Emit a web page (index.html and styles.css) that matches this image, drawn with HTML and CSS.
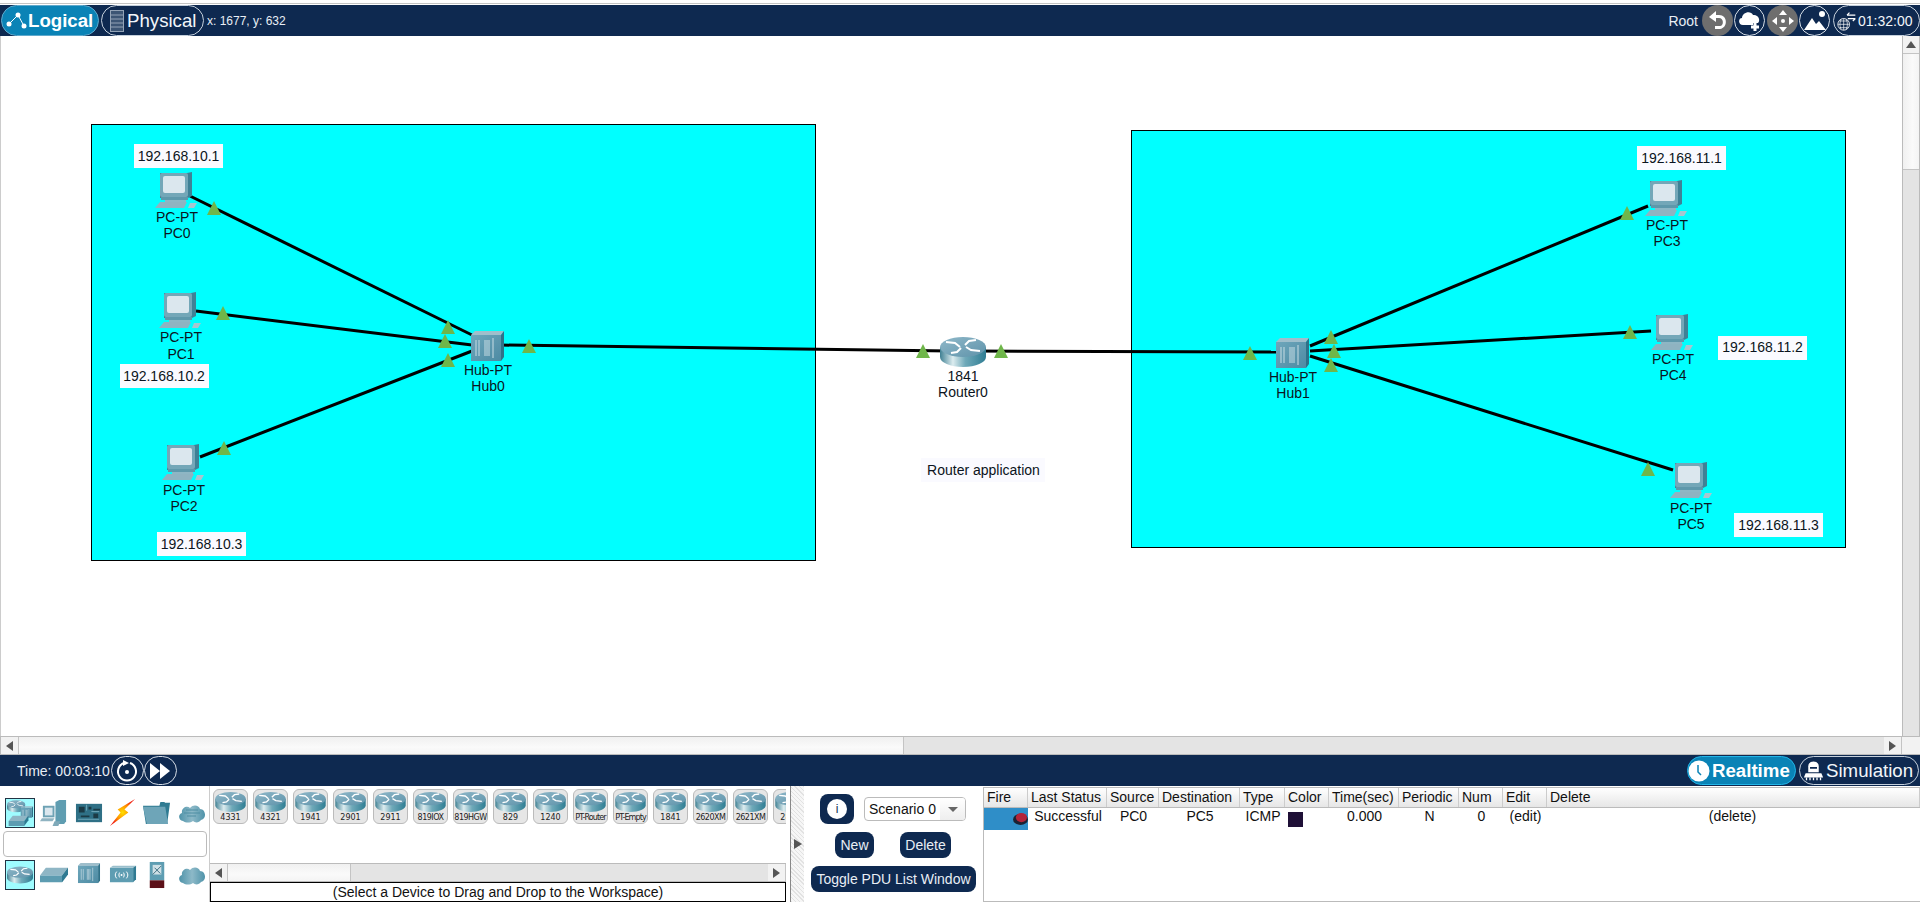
FILE: index.html
```html
<!DOCTYPE html>
<html lang="en">
<head>
<meta charset="utf-8">
<title>Packet Tracer Web</title>
<link rel="stylesheet" href="styles.css">
</head>
<body>
<svg class="defs" width="0" height="0" aria-hidden="true">
  <defs>
    <linearGradient id="rbody" x1="0" x2="1" y1="0" y2="0">
      <stop offset="0" stop-color="#3f8093"/><stop offset=".28" stop-color="#dcecef"/><stop offset=".55" stop-color="#6fa9b9"/><stop offset="1" stop-color="#2f7d93"/>
    </linearGradient>
    <linearGradient id="rtop" x1="0" x2="1" y1="0" y2="1">
      <stop offset="0" stop-color="#8fb8c9"/><stop offset="1" stop-color="#5f93aa"/>
    </linearGradient>
    <linearGradient id="hubf" x1="0" x2="1" y1="0" y2="1">
      <stop offset="0" stop-color="#6ea6bb"/><stop offset="1" stop-color="#4d8ba3"/>
    </linearGradient>
    <linearGradient id="cloudg" x1="0" x2="1" y1="0" y2="0">
      <stop offset="0" stop-color="#4f93a9"/><stop offset=".5" stop-color="#8db9c8"/><stop offset="1" stop-color="#4f93a9"/>
    </linearGradient>
    <radialGradient id="bolt" cx=".5" cy=".5" r=".5">
      <stop offset="0" stop-color="#ffe000"/><stop offset=".6" stop-color="#ff8a00"/><stop offset="1" stop-color="#f02010"/>
    </radialGradient>
    <symbol id="router" viewBox="0 0 46 30">
      <path d="M0 10v10c0 5.500 10.300 10 23 10s23-4.500 23-10V10z" fill="url(#rbody)"/>
      <ellipse cx="23" cy="10" rx="23" ry="10" fill="url(#rtop)"/>
      <path d="M6 5l9 1 5 4M11 16l6-1 4-4M40 14l-9-1-5-3M36 3l-7 1-4 4" fill="none" stroke="#fff" stroke-width="2"/>
    </symbol>
    <symbol id="hub" viewBox="0 0 33 30">
      <path d="M0 4 4 0h29l-3 4z" fill="#9fbecb"/>
      <path d="M30 4l3-4v26l-3 4z" fill="#2f7188"/>
      <rect y="4" width="30" height="26" fill="url(#hubf)"/>
      <path d="M5 9v16M8 9v16M14 9v16M16 9v16M18 9v16M22 7v20" stroke="#c9dde4" stroke-width="1"/>
    </symbol>
    <symbol id="pc" viewBox="0 0 43 37">
      <path d="M5 1 32 1 37 0V24L33 26H5z" fill="#3f8196"/>
      <rect x="5" y="1" width="28" height="24" rx="2" fill="#73a7b8"/>
      <rect x="8" y="4" width="22" height="17" rx="2" fill="#dbe7ee"/>
      <path d="M6 25h27v3H6z" fill="#5e98ab"/>
      <path d="M10 28h21v3H10z" fill="#8eb6c4"/>
      <path d="M5 30h27l-3 6H0z" fill="#8fb3c1"/>
      <path d="M35 31h7l-3 5h-6z" fill="#a9c5cf"/>
    </symbol>
    <symbol id="switch" viewBox="0 0 28 15">
      <path d="M6 0h22l-6 8H0z" fill="#8fb6c5"/><path d="M0 8h22v7H0z" fill="#5d9cb1"/><path d="M22 8l6-8v7l-6 8z" fill="#2f7a92"/>
    </symbol>
    <symbol id="cloud" viewBox="0 0 28 20">
      <path d="M5 18C0 17 0 11 4 10 3 5 9 2 12 5c3-4 9-3 10 1 6 0 7 10 1 11-2 3-6 3-8 1-3 2-7 2-10 0z" fill="url(#cloudg)"/>
    </symbol>
  </defs>
</svg>

<div class="strip"></div>

<header class="bar topbar">
  <div class="pill pill-active pill-logical">
    <svg class="ic-logical" viewBox="0 0 22 20"><path d="M5 12 13 4 19 15" fill="none" stroke="#fff" stroke-width="1"/><circle cx="4" cy="13" r="2.500" fill="#fff"/><circle cx="13" cy="4" r="2.500" fill="#fff"/><circle cx="19" cy="15" r="2.500" fill="#fff"/></svg>
    <span>Logical</span>
  </div>
  <div class="pill pill-physical">
    <svg class="ic-physical" viewBox="0 0 14 22"><rect x=".5" y=".5" width="13" height="21" fill="#3c5574" stroke="#93a3b6"/><path d="M1 5h12M1 9h12M1 13h12M1 17h12" stroke="#93a3b6"/></svg>
    <span>Physical</span>
  </div>
  <span class="coords">x: 1677, y: 632</span>
  <span class="spacer"></span>
  <span class="root">Root</span>
  <div class="round round-gray">
    <svg viewBox="0 0 24 24"><path d="M3 8 10 2v4h3c9 0 9 13 1 14H9v-3h5c4 0 4-8-1-8h-3v4z" fill="#fff"/></svg>
  </div>
  <div class="round round-line">
    <svg viewBox="0 0 24 24"><path d="M5 16c-5 0-5-7-1-7 0-6 9-8 11-3 5-1 8 5 5 8h-5v2z" fill="#fff"/><path d="M17 14v8M13 18h8" stroke="#fff" stroke-width="3"/></svg>
  </div>
  <div class="round round-gray round-move">
    <svg viewBox="0 0 24 24"><path d="M12 1l4 5H8zM12 23l-4-5h8zM1 12l5-4v8zM23 12l-5 4V8z" fill="#fff"/><circle cx="12" cy="12" r="2" fill="#fff"/></svg>
  </div>
  <div class="round round-line">
    <svg viewBox="0 0 24 24"><circle cx="19" cy="5" r="3" fill="#fff"/><path d="M1 21 9 9l4 6 3-3 7 9z" fill="#fff"/></svg>
  </div>
  <div class="pill pill-clock">
    <svg class="ic-net" viewBox="0 0 24 24"><circle cx="8" cy="16" r="7" fill="none" stroke="#fff"/><path d="M1 16h14M8 9v14M3 12h10M3 20h10M5 10c-2 4-2 8 0 12M11 10c2 4 2 8 0 12" stroke="#fff" stroke-width=".8" fill="none"/><path d="M12 5h10M12 5l3-3M22 9H13M22 9l-3 3" stroke="#fff" stroke-width="1.500" fill="none"/></svg>
    <span>01:32:00</span>
  </div>
</header>

<main class="stage">
  <svg class="canvas" viewBox="1 36 1901 700">
    <rect class="area" x="91.500" y="124.500" width="724" height="436"/>
    <rect class="area" x="1131.500" y="130.500" width="714" height="417"/>

    <line class="cable" x1="190" y1="196" x2="472" y2="335"/>
    <line class="cable" x1="196" y1="311" x2="472" y2="345"/>
    <line class="cable" x1="200" y1="457" x2="472" y2="351"/>
    <line class="cable" x1="500" y1="345" x2="950" y2="351"/>
    <line class="cable" x1="975" y1="351" x2="1280" y2="352"/>
    <line class="cable" x1="1310" y1="346" x2="1648" y2="206"/>
    <line class="cable" x1="1310" y1="351" x2="1651" y2="331"/>
    <line class="cable" x1="1310" y1="356" x2="1673" y2="470"/>

    <use href="#pc" x="155" y="172" width="43" height="37"/>
    <use href="#pc" x="159" y="292" width="43" height="37"/>
    <use href="#pc" x="162" y="444" width="43" height="37"/>
    <use href="#pc" x="1645" y="180" width="43" height="37"/>
    <use href="#pc" x="1651" y="314" width="43" height="37"/>
    <use href="#pc" x="1670" y="462" width="43" height="37"/>
    <use href="#hub" x="471" y="331" width="33" height="30"/>
    <use href="#hub" x="1276" y="338" width="33" height="30"/>
    <use href="#router" x="940" y="337" width="46" height="30"/>

    <polygon class="link" points="214,201 221,215 207,215"/>
    <polygon class="link" points="223,306 230,320 216,320"/>
    <polygon class="link" points="224,441 231,455 217,455"/>
    <polygon class="link" points="448,320 455,334 441,334"/>
    <polygon class="link" points="445,334 452,348 438,348"/>
    <polygon class="link" points="448,353 455,367 441,367"/>
    <polygon class="link" points="529,339 536,353 522,353"/>
    <polygon class="link" points="923,344 930,358 916,358"/>
    <polygon class="link" points="1001,344 1008,358 994,358"/>
    <polygon class="link" points="1250,346 1257,360 1243,360"/>
    <polygon class="link" points="1331,330 1338,344 1324,344"/>
    <polygon class="link" points="1334,344 1341,358 1327,358"/>
    <polygon class="link" points="1331,358 1338,372 1324,372"/>
    <polygon class="link" points="1627,206 1634,220 1620,220"/>
    <polygon class="link" points="1630,325 1637,339 1623,339"/>
    <polygon class="link" points="1648,462 1655,476 1641,476"/>

    <text class="dev" x="177" y="222">PC-PT</text><text class="dev" x="177" y="238">PC0</text>
    <text class="dev" x="181" y="342">PC-PT</text><text class="dev" x="181" y="359">PC1</text>
    <text class="dev" x="184" y="495">PC-PT</text><text class="dev" x="184" y="511">PC2</text>
    <text class="dev" x="488" y="375">Hub-PT</text><text class="dev" x="488" y="391">Hub0</text>
    <text class="dev" x="963" y="381">1841</text><text class="dev" x="963" y="397">Router0</text>
    <text class="dev" x="1293" y="382">Hub-PT</text><text class="dev" x="1293" y="398">Hub1</text>
    <text class="dev" x="1667" y="230">PC-PT</text><text class="dev" x="1667" y="246">PC3</text>
    <text class="dev" x="1673" y="364">PC-PT</text><text class="dev" x="1673" y="380">PC4</text>
    <text class="dev" x="1691" y="513">PC-PT</text><text class="dev" x="1691" y="529">PC5</text>

    <rect class="note-bg" x="134" y="144" width="89" height="24"/><text class="note" x="178.500" y="161">192.168.10.1</text>
    <rect class="note-bg" x="120" y="364" width="89" height="24"/><text class="note" x="164" y="381">192.168.10.2</text>
    <rect class="note-bg" x="157" y="532" width="89" height="24"/><text class="note" x="201.500" y="549">192.168.10.3</text>
    <rect class="note-bg" x="1637" y="146" width="89" height="24"/><text class="note" x="1681.500" y="163">192.168.11.1</text>
    <rect class="note-bg" x="1718" y="336" width="89" height="24"/><text class="note" x="1762.500" y="352">192.168.11.2</text>
    <rect class="note-bg" x="1734" y="513" width="89" height="24"/><text class="note" x="1778.500" y="530">192.168.11.3</text>
    <rect class="note-bg" x="921" y="458" width="124" height="24"/><text class="note" x="983.500" y="475">Router application</text>
  </svg>
  <div class="vbar">
    <div class="sb-btn sb-btn-v"><i class="tri tri-up"></i></div>
    <div class="vthumb"></div>
    <div class="vtrack"></div>
  </div>
</main>

<div class="hbar hbar-main">
  <div class="sb-btn"><i class="tri tri-left"></i></div>
  <div class="hthumb hthumb-main"></div>
  <div class="htrack"></div>
  <div class="sb-btn"><i class="tri tri-right"></i></div>
  <div class="corner"></div>
</div>

<div class="bar timebar">
  <span class="time">Time: 00:03:10</span>
  <div class="round round-line round-time">
    <svg viewBox="0 0 24 24"><path d="M9 4a9 9 0 1 0 6 0" fill="none" stroke="#fff" stroke-width="2"/><path d="M8 1l6 3-6 3z" fill="#fff"/><circle cx="12" cy="13" r="2" fill="#fff"/></svg>
  </div>
  <div class="round round-line round-time">
    <svg viewBox="0 0 24 24"><path d="M2 4l10 8-10 8zM12 4l10 8-10 8z" fill="#fff"/></svg>
  </div>
  <span class="spacer"></span>
  <div class="pill pill-active pill-real">
    <svg class="ic-clock" viewBox="0 0 22 22"><circle cx="11" cy="11" r="10.500" fill="#fff"/><path d="M10 5v7l3 3" fill="none" stroke="#0a83b6" stroke-width="1.500"/></svg>
    <span>Realtime</span>
  </div>
  <div class="pill pill-sim">
    <svg class="ic-sim" viewBox="0 0 24 22"><path d="M6 6c0-7 12-7 12 0v7H6z" fill="#fff"/><rect x="8" y="7" width="8" height="2" fill="#0e2950"/><path d="M3 14h18l2 5H1z" fill="#fff"/><path d="M4 19v3M8 19v3M12 19v3M16 19v3M20 19v3" stroke="#fff" stroke-width="1.500"/></svg>
    <span>Simulation</span>
  </div>
</div>

<section class="bottom">
  <div class="cats">
    <div class="cat-row">
      <div class="cat cat-on">
        <svg viewBox="0 0 29 29"><use href="#router" x="1" y="1" width="19" height="13"/><use href="#hub" x="15" y="7" width="13" height="13"/><use href="#switch" x="2" y="17" width="22" height="11"/></svg>
      </div>
      <div class="cat">
        <svg viewBox="0 0 29 29"><path d="M16 3l4-2h7v22l-2 3h-9z" fill="#5f9db1"/><path d="M3 7h12v12H3z" fill="#6ea2b4"/><path d="M5 9h8v8H5z" fill="#dbe7ee"/><path d="M2 20h13l-2 3H0z" fill="#8fb3c1"/><path d="M15 23h6l-2 5h-6z" fill="#7fa9b9"/></svg>
      </div>
      <div class="cat">
        <svg viewBox="0 0 29 29"><rect x="1" y="5" width="27" height="19" fill="#2f7086"/><path d="M4 8h6v6H4zM14 8h3v3h-3zM19 10h7v2h-7zM6 17h9v2H6zM19 15h5v5h-5z" fill="#1b3a45"/><path d="M3 21h22M12 6v6M17 13h8" stroke="#7fb3c4" stroke-width=".8"/></svg>
      </div>
      <div class="cat">
        <svg viewBox="0 0 29 29"><path d="M27 0 16 11l4 3L1 28l11-14-3-3z" fill="url(#bolt)"/></svg>
      </div>
      <div class="cat">
        <svg viewBox="0 0 29 29"><path d="M18 3h4l1 1h5l-3 22H3L0 7h17z" fill="#2f7b92"/><path d="M0 8h23l3 18H4z" fill="#6ea5b8"/></svg>
      </div>
      <div class="cat">
        <svg viewBox="0 0 28 20"><use href="#cloud" width="28" height="20"/><path d="M8 7h12M6 10h16M9 13h9" stroke="#4f8ea3" stroke-width="1"/></svg>
      </div>
    </div>
    <input class="search" type="text" aria-label="Search devices">
    <div class="cat-row">
      <div class="cat cat-on">
        <svg viewBox="0 0 29 29"><use href="#router" x="1" y="5" width="27" height="19"/></svg>
      </div>
      <div class="cat">
        <svg viewBox="0 0 28 15"><use href="#switch" width="28" height="15"/></svg>
      </div>
      <div class="cat">
        <svg viewBox="0 0 29 29"><use href="#hub" x="3" y="2" width="23" height="21"/></svg>
      </div>
      <div class="cat">
        <svg viewBox="0 0 29 29"><path d="M1 7h24v15H1z" fill="#5e9db2"/><path d="M1 7l3-2h24l-3 2z" fill="#9abfcc"/><path d="M25 7l3-2v14l-3 3z" fill="#2f7a92"/><path d="M8 11c-2 2-2 5 0 7M18 11c2 2 2 5 0 7M11 12c-1 2-1 3 0 5M15 12c1 2 1 3 0 5" fill="none" stroke="#fff"/><circle cx="13" cy="14.500" r="1" fill="#fff"/></svg>
      </div>
      <div class="cat">
        <svg viewBox="0 0 29 29"><path d="M7 1h15v19H7z" fill="#5e9db2"/><path d="M7 20h15v8H7z" fill="#5c1018"/><path d="M10 4h9v10h-9z" fill="#cfe0e6"/><path d="M10 14l9-9M12 7l6 6" stroke="#3c6d7f" stroke-width="1"/></svg>
      </div>
      <div class="cat">
        <svg viewBox="0 0 28 20"><use href="#cloud" width="28" height="20"/></svg>
      </div>
    </div>
  </div>

  <div class="library">
    <div class="thumbs">
      <div class="thumb"><svg viewBox="0 0 46 30"><use href="#router" width="46" height="30"/></svg><span>4331</span></div>
      <div class="thumb"><svg viewBox="0 0 46 30"><use href="#router" width="46" height="30"/></svg><span>4321</span></div>
      <div class="thumb"><svg viewBox="0 0 46 30"><use href="#router" width="46" height="30"/></svg><span>1941</span></div>
      <div class="thumb"><svg viewBox="0 0 46 30"><use href="#router" width="46" height="30"/></svg><span>2901</span></div>
      <div class="thumb"><svg viewBox="0 0 46 30"><use href="#router" width="46" height="30"/></svg><span>2911</span></div>
      <div class="thumb"><svg viewBox="0 0 46 30"><use href="#router" width="46" height="30"/></svg><span class="tight">819IOX</span></div>
      <div class="thumb"><svg viewBox="0 0 46 30"><use href="#router" width="46" height="30"/></svg><span class="tight">819HGW</span></div>
      <div class="thumb"><svg viewBox="0 0 46 30"><use href="#router" width="46" height="30"/></svg><span>829</span></div>
      <div class="thumb"><svg viewBox="0 0 46 30"><use href="#router" width="46" height="30"/></svg><span>1240</span></div>
      <div class="thumb"><svg viewBox="0 0 46 30"><use href="#router" width="46" height="30"/></svg><span class="tighter">PT-Router</span></div>
      <div class="thumb"><svg viewBox="0 0 46 30"><use href="#router" width="46" height="30"/></svg><span class="tighter">PT-Empty</span></div>
      <div class="thumb"><svg viewBox="0 0 46 30"><use href="#router" width="46" height="30"/></svg><span>1841</span></div>
      <div class="thumb"><svg viewBox="0 0 46 30"><use href="#router" width="46" height="30"/></svg><span class="tight">2620XM</span></div>
      <div class="thumb"><svg viewBox="0 0 46 30"><use href="#router" width="46" height="30"/></svg><span class="tight">2621XM</span></div>
      <div class="thumb"><svg viewBox="0 0 46 30"><use href="#router" width="46" height="30"/></svg><span>2811</span></div>
    </div>
    <div class="hbar hbar-lib">
      <div class="sb-btn"><i class="tri tri-left"></i></div>
      <div class="hthumb hthumb-lib"></div>
      <div class="htrack"></div>
      <div class="sb-btn"><i class="tri tri-right"></i></div>
    </div>
    <div class="status">(Select a Device to Drag and Drop to the Workspace)</div>
  </div>

  <div class="splitter"><div class="split-core"><i class="tri tri-right tri-split"></i></div></div>

  <div class="scenario">
    <div class="sc-row sc-row-top">
      <button class="info" type="button"><span>i</span></button>
      <div class="select"><span class="select-text">Scenario 0</span><span class="select-arrow"><i class="tri tri-down"></i></span></div>
    </div>
    <div class="sc-row sc-row-mid">
      <button class="btn btn-new" type="button">New</button>
      <button class="btn btn-del" type="button">Delete</button>
    </div>
    <button class="btn btn-toggle" type="button">Toggle PDU List Window</button>
  </div>

  <div class="pdu">
    <div class="pdu-row pdu-head">
      <div>Fire</div><div>Last Status</div><div>Source</div><div>Destination</div><div>Type</div><div>Color</div><div>Time(sec)</div><div>Periodic</div><div>Num</div><div>Edit</div><div>Delete</div>
    </div>
    <div class="pdu-row pdu-data">
      <div class="fire"><svg viewBox="0 0 16 14"><ellipse cx="8" cy="8" rx="8" ry="6" fill="#1c2233"/><ellipse cx="9" cy="6" rx="6" ry="5" fill="#b4243a"/></svg></div>
      <div>Successful</div><div>PC0</div><div>PC5</div><div>ICMP</div><div class="swatch-cell"><i class="swatch"></i></div><div>0.000</div><div>N</div><div>0</div><div>(edit)</div><div class="cell-delete">(delete)</div>
    </div>
  </div>
</section>
</body>
</html>
```

FILE: styles.css
```css
* { box-sizing: border-box; }
html, body { margin: 0; height: 100%; }
body {
  width: 1920px;
  height: 902px;
  overflow: hidden;
  display: flex;
  flex-direction: column;
  background: #fff;
  font-family: "Liberation Sans", Arial, sans-serif;
  font-size: 14px;
  color: #111;
}
.defs { position: absolute; }
.strip { height: 5px; flex: none; border-top: 3px solid #fff; border-bottom: 1px solid #fff; background: #c4c4c4; }

.bar { flex: none; display: flex; align-items: center; background: #0e2950; color: #e8eef5; }
.topbar { height: 31px; padding-left: 1px; }
.timebar { height: 31px; padding-left: 17px; }
.spacer { flex: 1; }

.pill {
  display: flex; align-items: center; height: 31px; border-radius: 15.500px;
  border: 1px solid #c5d0dc; font-size: 18.670px; color: #f2f6fa;
}
.pill-active { background: #0a83b6; color: #fff; font-weight: 700; border-color: #0a83b6; }
.pill-logical { width: 98px; padding-left: 3px; gap: 1px; border-color: #5fa9cc; }
.pill-physical { width: 103px; margin-left: 2px; padding-left: 8px; gap: 3px; }
.ic-logical { width: 22px; height: 20px; }
.ic-physical { width: 14px; height: 22px; }
.coords { margin-left: 3px; font-size: 12px; }
.root { font-size: 14px; margin-right: 4px; }

.round {
  flex: none; width: 31px; height: 31px; border-radius: 50%; margin-right: 1px;
  display: flex; align-items: center; justify-content: center;
}
.round svg { width: 24px; height: 24px; }
.round-gray { background: #6e6e6e; }
.round-line { border: 1px solid #d5dde6; }
.round-move { margin-left: 1px; }
.pill-clock { width: 87px; margin-left: 2px; margin-right: 0; font-size: 14px; padding-left: 3px; gap: 1px; }
.ic-net { width: 20px; height: 22px; }

.time { margin-right: 1px; }
.round-time { width: 33px; height: 29px; border-radius: 15px; margin-right: 0; }
.pill-real { width: 109px; height: 29px; padding-left: 0; gap: 2px; border-color: #21b5e8; margin-right: 3px; }
.pill-sim { width: 120px; height: 29px; padding-left: 3px; gap: 2px; margin-right: 1px; }
.ic-clock { width: 22px; height: 22px; }
.ic-sim { width: 21px; height: 21px; }

.stage { flex: none; height: 700px; display: flex; border-left: 1px solid #ccc; }
.canvas { width: 1901px; height: 700px; display: block; }
.area { fill: #00ffff; stroke: #000; stroke-width: 1; }
.cable { stroke: #000; stroke-width: 3; }
.link { fill: #6fb64a; }
.dev, .note { font-family: "Liberation Sans", Arial, sans-serif; font-size: 14px; text-anchor: middle; fill: #0b1420; }
.note-bg { fill: #fafaff; }

.vbar { width: 18px; flex: none; display: flex; flex-direction: column; border-left: 1px solid #bbb; border-right: 1px solid #bbb; }
.sb-btn { flex: none; width: 18px; height: 100%; display: flex; align-items: center; justify-content: center; background: #f2f2f2; border-right: 1px solid #c4c4c4; }
.sb-btn-v { width: 100%; height: 18px; border-right: 0; border-bottom: 1px solid #c4c4c4; }
.vthumb { height: 116px; flex: none; background: linear-gradient(90deg, #f0f0f0, #fafafa 60%, #f4f4f4); border-bottom: 1px solid #c4c4c4; }
.vtrack { flex: 1; background: #e4e4e4; }

.tri { display: block; width: 0; height: 0; border-style: solid; border-color: transparent; }
.tri-up { border-width: 0 5px 7px; border-bottom-color: #555; }
.tri-left { border-width: 5px 7px 5px 0; border-right-color: #555; }
.tri-right { border-width: 5px 0 5px 7px; border-left-color: #555; }
.tri-down { border-width: 5px 5px 0; border-top-color: #666; }

.hbar { flex: none; display: flex; height: 19px; border-top: 1px solid #bbb; border-bottom: 1px solid #bbb; background: #e4e4e4; }
.hbar-main { border-left: 1px solid #bbb; }
.hthumb { flex: none; background: linear-gradient(#f0f0f0, #fafafa 60%, #f4f4f4); border-right: 1px solid #c4c4c4; }
.hthumb-main { width: 885px; }
.hthumb-lib { width: 123px; }
.htrack { flex: 1; background: #e4e4e4; }
.corner { width: 18px; flex: none; background: #f2f2f2; }

.bottom { flex: 1; min-height: 0; display: flex; }

.cats { flex: none; width: 210px; padding: 12px 0 0 3px; border-right: 1px solid #ccc; }
.cat-row { display: grid; grid-template-columns: repeat(6, 34.300px); height: 29px; }
.cat { display: flex; align-items: center; justify-content: center; }
.cat svg { width: 28px; height: 28px; }
.cat-on { width: 30px; height: 30px; margin-left: 2px; background: #9ffcff; border: 1px solid #234; }
.search { display: block; width: 204px; height: 26px; margin: 4px 0 3px; padding: 0; border: 1px solid #bbb; border-radius: 4px; background: #fff; }

.library { flex: none; width: 576px; display: flex; flex-direction: column; }
.thumbs { height: 77px; flex: none; display: flex; gap: 5px; padding: 3px 0 0 3px; overflow: hidden; }
.thumb {
  flex: none; width: 35px; height: 35px; border: 1px solid #bbb; border-radius: 6px; background: #e6e6e6;
  display: flex; flex-direction: column; align-items: center; overflow: hidden;
}
.thumb svg { width: 31px; height: 20px; flex: none; margin-top: 2px; }
.thumb span { width: 100%; text-align: center; font-family: "DejaVu Sans", sans-serif; font-size: 8px; line-height: 11px; white-space: nowrap; color: #222; }
.thumb .tight { letter-spacing: -.5px; }
.thumb .tighter { letter-spacing: -.9px; }
.hbar-lib { height: 19px; }
.status { height: 20px; flex: none; border: 1px solid #000; text-align: center; line-height: 18px; }

.splitter { flex: none; width: 22px; padding: 0 4px; }
.split-core {
  height: 100%; border-left: 1px solid #888;
  background: #efefef repeating-linear-gradient(45deg, #e2e2e2 0 1px, #f6f6f6 1px 3px);
  display: flex; align-items: center; justify-content: center;
}
.tri-split { border-width: 5px 0 5px 8px; border-left-color: #555; }

.scenario { flex: none; width: 175px; display: flex; flex-direction: column; align-items: flex-start; padding-top: 8px; }
.sc-row { display: flex; align-items: center; }
.sc-row-top { padding-left: 12px; gap: 10px; height: 30px; }
.sc-row-mid { padding-left: 27px; gap: 26px; margin-top: 8px; height: 26px; }
.info { width: 34px; height: 30px; padding: 0; border: 0; border-radius: 8px; background: #0e2950; display: flex; align-items: center; justify-content: center; }
.info span { width: 20px; height: 20px; border-radius: 50%; background: #fff; color: #0e2950; font: 12px/20px "Liberation Sans", Arial, sans-serif; text-align: center; }
.select { width: 102px; height: 24px; display: flex; border: 1px solid #bbb; border-radius: 4px; background: #fff; overflow: hidden; }
.select-text { flex: 1; padding-left: 4px; line-height: 22px; }
.select-arrow { width: 25px; background: linear-gradient(#fff, #eee); display: flex; align-items: center; justify-content: center; }
.btn { height: 26px; padding: 0; border: 0; border-radius: 8px; background: #0e2950; color: #e8eef5; font: 14px "Liberation Sans", Arial, sans-serif; }
.btn-new { width: 39px; }
.btn-del { width: 51px; }
.btn-toggle { width: 165px; margin: 8px 0 0 3px; }

.pdu { flex: 1; min-width: 0; height: 115px; margin-top: 1px; border: 1px solid #bbb; border-right: 0; }
.pdu-row { display: grid; grid-template-columns: 44px 79px 52px 81px 45px 44px 70px 60px 44px 44px 1fr; }
.pdu-head { height: 20px; border-bottom: 1px solid #bbb; background: linear-gradient(#fff, #e6e6e6); }
.pdu-head div { padding-left: 3px; line-height: 19px; border-right: 1px solid #ccc; }
.pdu-data { height: 22px; text-align: center; line-height: 16px; }
.pdu-data div { padding-left: 1px; }
.pdu-data .cell-delete { padding: 0 2px 0 0; }
.pdu-data .fire { background: #2f8ec8; display: flex; justify-content: flex-end; align-items: flex-start; padding: 4px 0 0; }
.fire svg { width: 15px; height: 13px; }
.pdu-data .swatch-cell { display: flex; padding: 4px 0 0 3px; }
.swatch { display: block; width: 15px; height: 15px; background: #1f1037; }
```
